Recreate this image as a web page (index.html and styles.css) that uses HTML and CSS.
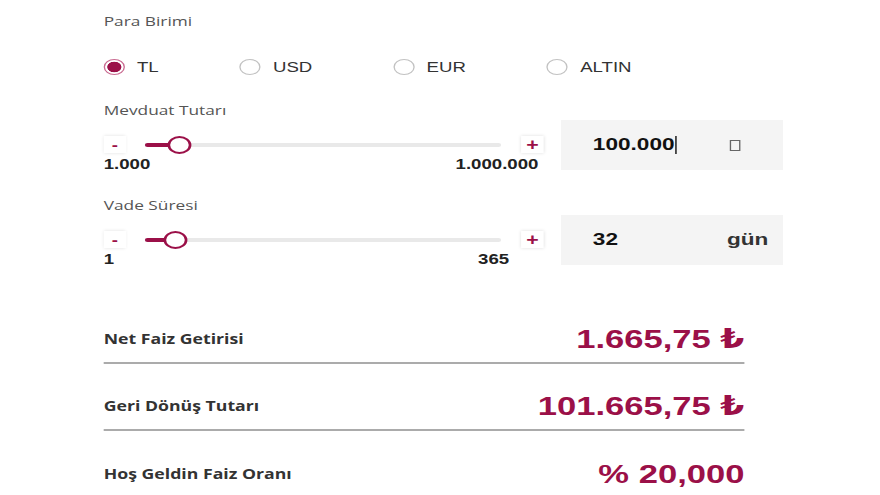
FILE: index.html
```html
<!DOCTYPE html>
<html lang="tr">
<head>
<meta charset="utf-8">
<title>Mevduat Hesaplama</title>
<link rel="stylesheet" href="styles.css">
</head>
<body>
<div class="page">
  <div class="label">Para Birimi</div>
  <div class="radios">
    <div class="radio checked"><span class="dot"></span>TL</div>
    <div class="radio"><span class="dot"></span>USD</div>
    <div class="radio"><span class="dot"></span>EUR</div>
    <div class="radio"><span class="dot"></span>ALTIN</div>
  </div>

  <div class="label gap-1">Mevduat Tutarı</div>
  <div class="field">
    <div class="slider-col">
      <div class="slider-row">
        <span class="step">-</span>
        <div class="track"><div class="fill" style="width:26px"></div><span class="thumb" style="left:26px"></span></div>
        <span class="step plus">+</span>
      </div>
      <div class="range"><span>1.000</span><span>1.000.000</span></div>
    </div>
    <div class="input"><span class="val">100.000</span><span class="caret"></span><span class="tofu"></span></div>
  </div>

  <div class="label gap-2">Vade Süresi</div>
  <div class="field">
    <div class="slider-col">
      <div class="slider-row">
        <span class="step">-</span>
        <div class="track"><div class="fill" style="width:22.5px"></div><span class="thumb" style="left:22.5px"></span></div>
        <span class="step plus">+</span>
      </div>
      <div class="range range-short"><span>1</span><span>365</span></div>
    </div>
    <div class="input"><span class="val">32</span><span class="unit">gün</span></div>
  </div>

  <div class="results">
    <div class="result"><span class="rlabel">Net Faiz Getirisi</span><span class="rvalue">1.665,75 ₺</span></div>
    <div class="result"><span class="rlabel">Geri Dönüş Tutarı</span><span class="rvalue">101.665,75 ₺</span></div>
    <div class="result last"><span class="rlabel">Hoş Geldin Faiz Oranı</span><span class="rvalue">% 20,000</span></div>
  </div>
</div>
</body>
</html>
```

FILE: styles.css
```css
html, body {
  margin: 0;
  padding: 0;
  background: #fff;
  overflow: hidden;
}

.page {
  width: 662px;
  box-sizing: border-box;
  padding: 12px 0 0 78px;
  transform: scaleX(1.3293);
  transform-origin: 0 0;
  font-family: "Liberation Sans", Arial, sans-serif;
  color: #222;
}

.label {
  font-family: "Open Sans", "Noto Sans", sans-serif;
  font-size: 13px;
  line-height: 18px;
  height: 18px;
  color: #555;
}

.gap-1 { margin-top: 24px; }
.gap-2 { margin-top: 26px; }

.radios {
  display: flex;
  align-items: center;
  gap: 61px;
  height: 20px;
  margin-top: 27px;
}

.radio {
  display: flex;
  align-items: center;
  gap: 9px;
  font-size: 14px;
  color: #333;
}

.dot {
  width: 16px;
  height: 16px;
  box-sizing: border-box;
  border-radius: 50%;
  border: 1.5px solid #c2c2c2;
  background: #fff;
}

.checked .dot {
  border-color: #c96a90;
  background: radial-gradient(circle, #9b1048 0, #9b1048 5px, #fff 5.6px);
}

.field {
  display: flex;
  height: 50px;
  margin-top: 1px;
}

.slider-col {
  width: 331px;
  padding-top: 16px;
}

.slider-row {
  display: flex;
  align-items: center;
  height: 17px;
}

.step {
  width: 17px;
  height: 17px;
  flex: none;
  display: flex;
  align-items: center;
  justify-content: center;
  background: #fff;
  box-shadow: 0 0 3px rgba(0, 0, 0, 0.13);
  color: #9b1048;
  font-weight: bold;
  font-size: 14px;
  line-height: 1;
}

.step.plus {
  font-size: 16px;
}

.track {
  flex: 1;
  position: relative;
  height: 4px;
  margin: 0 15px 0 14px;
  background: #e9e9e9;
  border-radius: 2px;
}

.fill {
  height: 100%;
  background: #9b1048;
  border-radius: 2px;
}

.thumb {
  position: absolute;
  top: 50%;
  width: 18px;
  height: 18px;
  margin: -9px 0 0 -9px;
  box-sizing: border-box;
  border: 2px solid #9b1048;
  border-radius: 50%;
  background: #fff;
}

.range {
  display: flex;
  justify-content: space-between;
  margin-top: 3px;
  padding-right: 4px;
  font-size: 14px;
  line-height: 16px;
  font-weight: bold;
  color: #222;
}

.range-short {
  padding-right: 26px;
}

.input {
  width: 167px;
  height: 50px;
  margin-left: 13px;
  box-sizing: border-box;
  padding-left: 24px;
  display: flex;
  align-items: center;
  background: #f4f4f4;
  font-size: 17px;
  font-weight: bold;
  color: #111;
}

.caret {
  width: 1px;
  height: 18px;
  margin-left: 1px;
  background: #000;
}

.tofu {
  width: 8px;
  height: 11px;
  box-sizing: border-box;
  border: 1px solid #666;
  margin-left: auto;
  margin-right: 32px;
}

.unit {
  margin-left: auto;
  margin-right: 11px;
  color: #333;
}

.results {
  width: 482px;
  margin-top: 47px;
}

.result {
  display: flex;
  justify-content: space-between;
  align-items: center;
  height: 52px;
  box-sizing: border-box;
  padding-top: 4px;
  border-bottom: 2px solid #ababab;
}

.result + .result {
  margin-top: 15px;
}

.result.last {
  border-bottom: none;
}

.rlabel {
  font-family: "Open Sans", "Noto Sans", sans-serif;
  font-weight: bold;
  font-size: 13.3px;
  color: #333;
}

.rvalue {
  font-family: "Liberation Sans", "DejaVu Sans", Arial, sans-serif;
  font-weight: bold;
  font-size: 26px;
  color: #9b1048;
}
```
